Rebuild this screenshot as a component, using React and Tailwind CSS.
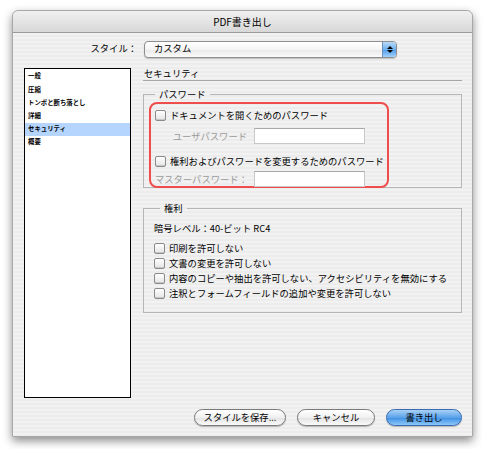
import React from 'react';

const FONT = { fontFamily: '"Noto Sans CJK JP", "Noto Sans", sans-serif' };

function Check({ label }) {
  return (
    <div className="flex items-center h-[15px] whitespace-nowrap">
      <span className="w-[11px] h-[11px] rounded-[2px] border border-[#8a8a8a] bg-[linear-gradient(#ffffff,#e4e4e4)] shadow-[inset_0_-1px_0_#c8c8c8] shrink-0" />
      <span className="ml-[4px] text-[9.3px] leading-none text-black">{label}</span>
    </div>
  );
}

function Field({ label }) {
  return (
    <div className="flex items-center h-[16px] whitespace-nowrap">
      <span className="w-[99px] text-right pr-[7px] text-[9.3px] text-[#9a9a9a] leading-none">{label}</span>
      <span className="w-[111px] h-[16px] bg-white border border-[#c8c8c8] border-t-[#a8a8a8]" />
    </div>
  );
}

function Button({ children, primary, w }) {
  return (
    <button
      className={`${w} h-[17px] rounded-full text-[9.3px] leading-none border whitespace-nowrap ${
        primary
          ? 'border-[#3a6ab0] bg-[linear-gradient(#a9d1f5,#5aa2ea_50%,#3e8ee3_51%,#8cc8f8)] text-black'
          : 'border-[#7a7a7a] bg-[linear-gradient(#ffffff,#f0f0f0_50%,#e2e2e2_51%,#fafafa)] text-black'
      } shadow-[0_1px_1px_rgba(0,0,0,0.25)]`}
    >
      {children}
    </button>
  );
}

export default function App() {
  const items = ['一般', '圧縮', 'トンボと断ち落とし', '詳細', 'セキュリティ', '概要'];
  return (
    <div className="w-[486px] h-[449px] bg-white pt-[10px] pl-[12px]" style={FONT}>
      <div className="w-[461px] h-[427px] rounded-t-[6px] border border-[#a8a8a8] shadow-[0_4px_10px_rgba(0,0,0,0.45)] bg-[repeating-linear-gradient(180deg,#ececec_0px,#ececec_2px,#f2f2f2_2px,#f2f2f2_4px)] flex flex-col overflow-hidden">
        {/* title bar */}
        <div className="h-[22px] shrink-0 rounded-t-[6px] bg-[linear-gradient(#f0f0f0,#d8d8d8)] border-b border-[#9a9a9a] flex items-center justify-center text-[10px] text-black">
          PDF書き出し
        </div>

        {/* style row */}
        <div className="flex items-center mt-[8px] h-[16px] whitespace-nowrap">
          <span className="w-[131px] text-right pr-[7px] text-[9.3px] text-black leading-none">スタイル：</span>
          <div className="w-[253px] h-[17px] rounded-[4px] border border-[#8e8e8e] bg-[linear-gradient(#ffffff,#f4f4f4_50%,#e8e8e8_51%,#fbfbfb)] flex items-center shadow-[0_1px_1px_rgba(0,0,0,0.2)] overflow-hidden">
            <span className="flex-1 pl-[9px] text-[9.3px] leading-none">カスタム</span>
            <span className="w-[14px] h-full bg-[linear-gradient(#b9dbf8,#6eb0ee_50%,#4f9ae8_51%,#a2d2fb)] border-l border-[#6a8fc0] flex flex-col items-center justify-center gap-[1px]">
              <span className="w-0 h-0 border-l-[3px] border-r-[3px] border-b-[3px] border-l-transparent border-r-transparent border-b-black" />
              <span className="w-0 h-0 border-l-[3px] border-r-[3px] border-t-[3px] border-l-transparent border-r-transparent border-t-black" />
            </span>
          </div>
        </div>

        {/* main */}
        <div className="flex mt-[11px]">
          <div className="ml-[11px] w-[107px] h-[330px] bg-white border border-black pt-[1px]">
            {items.map((it) => (
              <div
                key={it}
                className={`h-[13.2px] pl-[3px] flex items-center text-[6.4px] font-bold leading-none whitespace-nowrap ${
                  it === 'セキュリティ' ? 'bg-[#b5d5ff]' : ''
                }`}
              >
                {it}
              </div>
            ))}
          </div>

          <div className="ml-[12px] w-[319px]">
            <div className="h-[13px] border-b border-[#a6a6a6] pl-[1px] text-[9.3px] leading-none flex items-start pt-[1px]">
              セキュリティ
            </div>

            <fieldset className="mt-[9px] border border-[#b6b6b6] pl-[5px] pr-[4px] pb-[2px] h-[98px]">
              <legend className="ml-[6px] px-[4px] text-[9.3px] leading-none">パスワード</legend>
              <div className="mt-[3px] w-[240px] h-[86px] rounded-[8px] border-2 border-[#ef4c4c] pl-[4px] pt-[4px]">
                <Check label="ドキュメントを開くためのパスワード" />
                <div className="mt-[5px]">
                  <Field label="ユーザパスワード" />
                </div>
                <div className="mt-[10px]">
                  <Check label="権利およびパスワードを変更するためのパスワード" />
                </div>
                <div className="mt-[2px]">
                  <Field label="マスターパスワード：" />
                </div>
              </div>
            </fieldset>

            <fieldset className="mt-[16px] border border-[#b6b6b6] pl-[10px] h-[109px]">
              <legend className="ml-[6px] px-[4px] text-[9.3px] leading-none">権利</legend>
              <div className="mt-[11px] text-[9.3px] leading-none h-[12px] whitespace-nowrap">暗号レベル：40-ビット RC4</div>
              <div className="mt-[5px] flex flex-col">
                <Check label="印刷を許可しない" />
                <Check label="文書の変更を許可しない" />
                <Check label="内容のコピーや抽出を許可しない、アクセシビリティを無効にする" />
                <Check label="注釈とフォームフィールドの追加や変更を許可しない" />
              </div>
            </fieldset>
          </div>
        </div>

        {/* buttons */}
        <div className="flex justify-end items-center mt-[11px] pr-[10px] gap-[11px]">
          <Button w="w-[92px]">スタイルを保存...</Button>
          <Button w="w-[78px]">キャンセル</Button>
          <Button w="w-[76px]" primary>
            書き出し
          </Button>
        </div>
      </div>
    </div>
  );
}
